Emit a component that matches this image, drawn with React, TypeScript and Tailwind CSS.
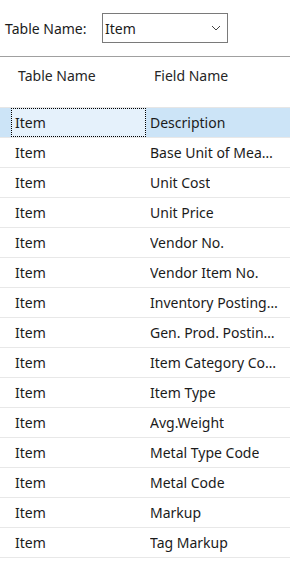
const fields = [
  'Description',
  'Base Unit of Measure',
  'Unit Cost',
  'Unit Price',
  'Vendor No.',
  'Vendor Item No.',
  'Inventory Posting Group',
  'Gen. Prod. Posting Group',
  'Item Category Code',
  'Item Type',
  'Avg.Weight',
  'Metal Type Code',
  'Metal Code',
  'Markup',
  'Tag Markup',
];

export default function App() {
  return (
    <div className="w-[290px] h-[566px] bg-white overflow-hidden text-[14px] text-[#1b1b1b] font-['Noto_Sans','Open_Sans',sans-serif]">
      {/* Filter bar */}
      <div className="flex items-center h-[56px] pl-[5px]">
        <span className="w-[97px]">Table Name:</span>
        <div className="flex items-center justify-between w-[126px] h-[30px] border border-[#7a7a7a] pl-[2px] pr-[6px]">
          <span>Item</span>
          <svg width="10" height="6" viewBox="0 0 10 6" className="text-[#444]">
            <path d="M1 1l4 4 4-4" fill="none" stroke="currentColor" strokeWidth="1" />
          </svg>
        </div>
      </div>
      <div className="h-px bg-[#a0a0a0]" />

      {/* Header */}
      <div className="flex items-center h-[36px] text-[#262626]">
        <span className="w-[154px] pl-[18px]">Table Name</span>
        <span>Field Name</span>
      </div>
      <div className="h-[14px]" />

      {/* Rows */}
      <div className="border-t border-[#e6e6e6]">
        {fields.map((f, i) => {
          const sel = i === 0;
          return (
            <div
              key={f}
              className={`flex items-stretch h-[30px] border-b border-[#e8e8e8] ${sel ? 'bg-[#cce4f7]' : ''}`}
            >
              <div className="w-[146px] pl-[11px] flex">
                <div
                  className={`flex-1 flex items-center pl-[3px] ${sel ? 'bg-[#e5f1fb] border border-dotted border-black' : 'border border-transparent'}`}
                >
                  Item
                </div>
              </div>
              <div className="flex-1 min-w-0 flex items-center pl-[4px] pr-[12px]">
                <span className="truncate">{f}</span>
              </div>
            </div>
          );
        })}
      </div>
    </div>
  );
}
